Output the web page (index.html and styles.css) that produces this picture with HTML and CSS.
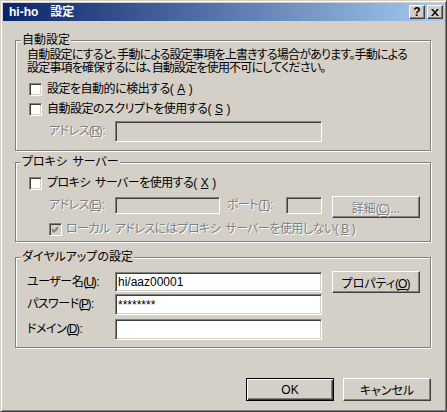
FILE: index.html
```html
<!DOCTYPE html>
<html>
<head>
  <meta charset="utf-8">
  <title>hi-ho 設定</title>
  <link rel="stylesheet" href="styles.css">
</head>
<body>
  <div class="window">
    <div class="titlebar">
      <span class="title">hi-ho　設定</span>
      <div class="caption-buttons">
        <button class="cap-btn help">?</button>
        <button class="cap-btn">
          <svg width="8" height="7" viewBox="0 0 8 7"><path d="M0 0h2l2 2.4 2-2.4h2l-3 3.5 3 3.5h-2l-2-2.4-2 2.4h-2l3-3.5z" fill="#000"/></svg>
        </button>
      </div>
    </div>

    <div class="content">
      <div class="group">
        <div class="group-title">自動設定</div>
        <p class="desc">自動設定にすると、手動による設定事項を上書きする場合があります。手動による<br>設定事項を確保するには、自動設定を使用不可にしてください。</p>
        <div class="check-row first"><span class="check"></span>設定を自動的に検出する(<u>A</u>)</div>
        <div class="check-row second"><span class="check"></span>自動設定のスクリプトを使用する(<u>S</u>)</div>
        <div class="row script-row">
          <span class="label sub disabled">アドレス(<u>R</u>):</span>
          <input class="field off wide" disabled>
        </div>
      </div>

      <div class="group proxy">
        <div class="group-title">プロキシ サーバー</div>
        <div class="check-row first"><span class="check"></span>プロキシ サーバーを使用する(<u>X</u>)</div>
        <div class="row proxy-row">
          <span class="label sub disabled">アドレス(<u>E</u>):</span>
          <input class="field off short" disabled>
          <span class="label port disabled">ポート(<u>T</u>):</span>
          <input class="field off tiny" disabled>
          <button class="btn side disabled">詳細(<u>C</u>)...</button>
        </div>
        <div class="check-row local disabled">
          <span class="check off">
            <svg width="13" height="13" viewBox="0 0 13 13"><path d="M3 5l2 2 4-4v3l-4 4-2-2z" fill="#808080"/></svg>
          </span>ローカル アドレスにはプロキシ サーバーを使用しない(<u>B</u>)
        </div>
      </div>

      <div class="group dialup">
        <div class="group-title">ダイヤルアップの設定</div>
        <div class="row user-row">
          <span class="label main">ユーザー名(<u>U</u>):</span>
          <input class="field wide" value="hi/aaz00001">
          <button class="btn side">プロパティ(<u>O</u>)</button>
        </div>
        <div class="row pass-row">
          <span class="label main">パスワード(<u>P</u>):</span>
          <input class="field wide" value="********">
        </div>
        <div class="row domain-row">
          <span class="label main">ドメイン(<u>D</u>):</span>
          <input class="field wide">
        </div>
      </div>

      <div class="footer">
        <button class="btn default">OK</button>
        <button class="btn">キャンセル</button>
      </div>
    </div>
  </div>
</body>
</html>
```

FILE: styles.css
```css
* {
  box-sizing: border-box;
}
body {
  margin: 0;
  font-family: "Liberation Sans", "Noto Sans CJK JP", sans-serif;
  font-size: 12px;
  font-feature-settings: "palt" 1;
  letter-spacing: -0.5px;
  word-spacing: 2px;
  color: #000;
}
u {
  margin: 0 -1px;
  text-decoration: underline;
  text-underline-offset: 1px;
}

/* window frame */
.window {
  width: 447px;
  height: 412px;
  background: #d4d0c8;
  border: 1px solid;
  border-color: #d4d0c8 #404040 #404040 #d4d0c8;
  box-shadow: inset 1px 1px #fff, inset -1px -1px #808080;
  padding: 2px;
  display: flex;
  flex-direction: column;
}
.titlebar {
  height: 18px;
  display: flex;
  align-items: center;
  padding: 0 1px 0 6px;
  background: linear-gradient(to right, #0a246a, #a6caf0);
}
.title {
  color: #fff;
  font-weight: bold;
  font-size: 12px;
  line-height: 14px;
  letter-spacing: 0;
}
.caption-buttons {
  margin-left: auto;
  display: flex;
  gap: 2px;
}
.cap-btn {
  width: 16px;
  height: 14px;
  padding: 0;
  display: flex;
  align-items: center;
  justify-content: center;
  background: #d4d0c8;
  border: 1px solid;
  border-color: #fff #404040 #404040 #fff;
  box-shadow: inset -1px -1px #808080, inset 1px 1px #d4d0c8;
}
.cap-btn.help {
  font-family: "Liberation Sans", sans-serif;
  font-weight: bold;
  font-size: 12px;
  line-height: 12px;
}

/* body */
.content {
  flex: 1;
  padding: 19px 13px 0 12px;
}
.group {
  display: flex;
  flex-direction: column;
  align-items: flex-start;
  border: 1px solid #808080;
  box-shadow: inset 1px 1px #fff, 1px 1px #fff;
  padding: 0 0 8px 11px;
}
.group.proxy {
  margin-top: 11px;
  padding-bottom: 5px;
}
.group.dialup {
  margin-top: 15px;
  padding-bottom: 7px;
}
.group-title {
  margin: -8px 0 0 -6px;
  padding: 0 1px;
  line-height: 14px;
  background: #d4d0c8;
  letter-spacing: 0;
}
.desc {
  margin: 2px 0 0;
  line-height: 13px;
  letter-spacing: -0.8px;
  white-space: nowrap;
}

/* checkboxes */
.check-row {
  display: flex;
  align-items: center;
  gap: 5px;
  height: 13px;
  line-height: 13px;
  margin-left: 2px;
  white-space: nowrap;
}
.check-row.first {
  margin-top: 8px;
}
.check-row.second {
  margin-top: 7px;
}
.check-row.local {
  margin: 5px 0 0 22px;
  gap: 4px;
}
.check {
  flex: none;
  width: 13px;
  height: 13px;
  background: #fff;
  border: 1px solid;
  border-color: #808080 #fff #fff #808080;
  box-shadow: inset 1px 1px #404040, inset -1px -1px #d4d0c8;
  position: relative;
}
.check.off {
  background: #d4d0c8;
}
.check svg {
  position: absolute;
  left: -1px;
  top: -1px;
}

/* rows with fields */
.row {
  display: flex;
  align-items: flex-start;
}
.label {
  white-space: nowrap;
}
.label.sub {
  width: 66px;
  margin-left: 22px;
}
.label.main {
  width: 88px;
}
.label.port {
  width: 59px;
  margin-left: 7px;
}
.disabled {
  color: #808080;
  text-shadow: 1px 1px #fff;
}
.field {
  height: 21px;
  padding: 0 2px;
  font: inherit;
  letter-spacing: 0;
  color: #000;
  background: #fff;
  border: 1px solid;
  border-color: #808080 #fff #fff #808080;
  box-shadow: inset 1px 1px #404040, inset -1px -1px #d4d0c8;
  outline: none;
}
.field.off {
  background: #d4d0c8;
}
.field.wide {
  width: 207px;
}
.field.short {
  width: 105px;
}
.field.tiny {
  width: 36px;
}
.script-row {
  margin-top: 5px;
}
.script-row .label {
  line-height: 21px;
}
.proxy-row {
  margin-top: 6px;
}
.proxy-row .field {
  height: 17px;
  margin-top: 1px;
}
.proxy-row .label {
  line-height: 17px;
  margin-top: 1px;
}
.user-row {
  margin-top: 7px;
}
.user-row .field {
  height: 20px;
  margin-top: 1px;
}
.user-row .label {
  line-height: 20px;
  margin-top: 1px;
}
.pass-row {
  margin-top: 1px;
}
.domain-row {
  margin-top: 4px;
}
.pass-row .label,
.domain-row .label {
  line-height: 21px;
}

/* buttons */
.btn {
  width: 88px;
  height: 23px;
  padding: 0;
  font: inherit;
  color: #000;
  background: #d4d0c8;
  border: 1px solid;
  border-color: #fff #404040 #404040 #fff;
  box-shadow: inset -1px -1px #808080, inset 1px 1px #d4d0c8;
}
.btn.side {
  height: 22px;
  margin-left: 10px;
}
.btn.disabled {
  color: #808080;
}
.btn.default {
  border-color: #000;
  box-shadow: inset 1px 1px #fff, inset -1px -1px #404040, inset -2px -2px #808080;
}
.footer {
  display: flex;
  justify-content: flex-end;
  gap: 9px;
  margin-top: 30px;
}
```
